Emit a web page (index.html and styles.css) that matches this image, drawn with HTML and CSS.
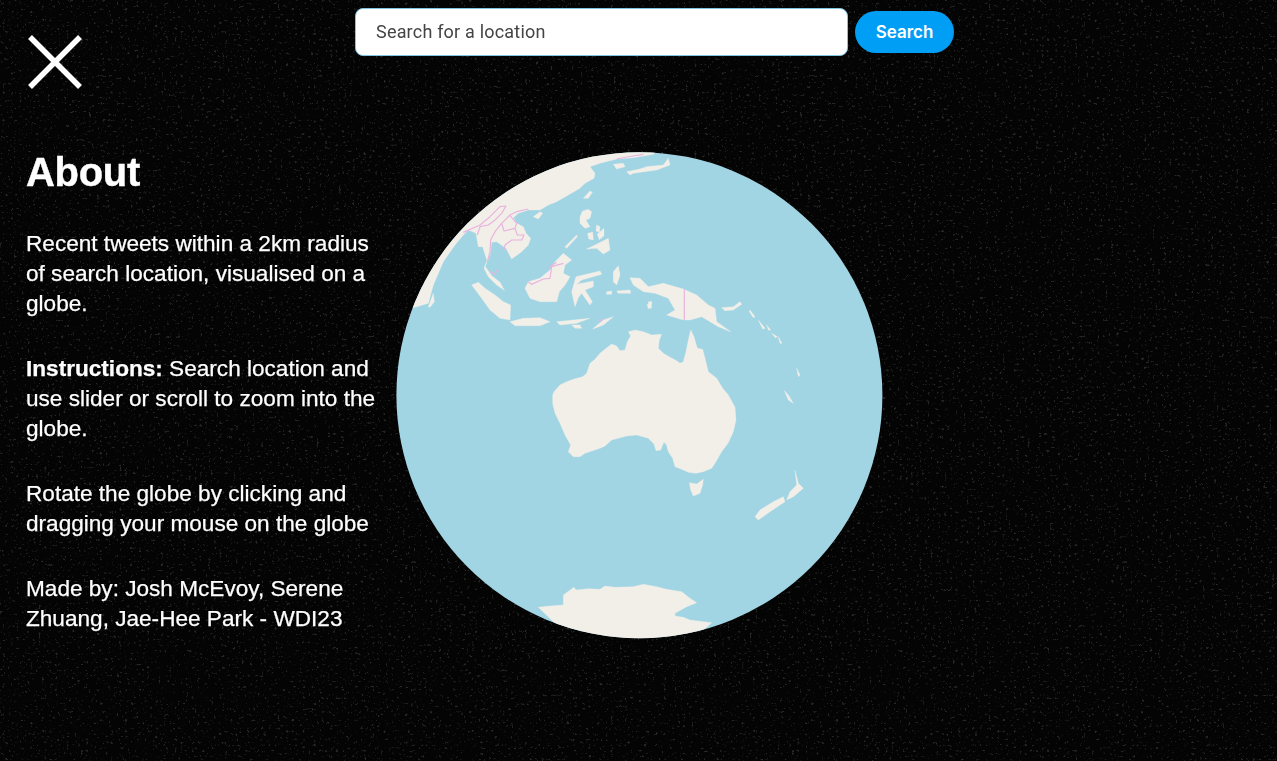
FILE: index.html
```html
<!DOCTYPE html>
<html lang="en">
<head>
<meta charset="utf-8">
<title>Tweet Globe</title>
<link rel="stylesheet" href="styles.css">
</head>
<body>
<svg class="stars" aria-hidden="true">
  <filter id="grain" x="0" y="0" width="100%" height="100%">
    <feTurbulence type="fractalNoise" baseFrequency="0.36" numOctaves="3" seed="11"/>
    <feColorMatrix type="matrix" values="0 0 0 0 0.8  0 0 0 0 0.78  0 0 0 0 0.74  7 0 0 0 -4.5"/>
    <feGaussianBlur stdDeviation="0.7"/>
  </filter>
  <rect class="stars-fill" width="100%" height="100%" filter="url(#grain)"/>
</svg>
<div class="page">
  <form class="search">
    <input class="search-input" type="text" placeholder="Search for a location">
    <button class="search-button" type="button">Search</button>
  </form>
  <aside class="about">
    <svg class="close" viewBox="0 0 54 54" aria-label="Close">
      <path d="M2 2 52 52M52 2 2 52"/>
    </svg>
    <h1>About</h1>
    <p>Recent tweets within a 2km radius of search location, visualised on a globe.</p>
    <p><strong>Instructions:</strong> Search location and use slider or scroll to zoom into the globe.</p>
    <p>Rotate the globe by clicking and dragging your mouse on the globe</p>
    <p>Made by: Josh McEvoy, Serene Zhuang, Jae-Hee Park - WDI23</p>
  </aside>
  <svg class="globe" viewBox="396 152 487 487" aria-label="Globe">
    <defs>
      <clipPath id="disc"><circle cx="639.4" cy="395.2" r="243"/></clipPath>
      <filter id="soft" x="-2%" y="-2%" width="104%" height="104%"><feGaussianBlur stdDeviation="0.55"/></filter>
    </defs>
    <circle class="sea" cx="639.4" cy="395.2" r="243"/>
    <g clip-path="url(#disc)">
      <g filter="url(#soft)">
        <!-- South-East Asia -->
        <g class="land" transform="translate(400 145) scale(.33333)">
          <polygon points="780,10 760,28 700,38 650,42 600,55 570,65 585,85 582,100 555,115 540,130 505,150 470,170 445,180 420,195 385,195 355,205 340,218 350,235 370,245 378,265 392,280 385,300 365,320 335,342 318,310 290,290 275,292 270,330 262,350 248,305 235,305 228,265 205,255 190,270 165,300 130,350 100,420 85,475 0,500 0,0 780,0"/>
          <polygon points="262,345 256,365 275,392 300,412 313,436 290,420 265,395 252,370"/>
          <polygon points="85,485 100,445 103,470 90,487"/>
          <polygon points="400,215 420,200 428,205 415,222"/>
          <polygon points="550,160 570,138 577,142 565,160"/>
          <polygon points="680,80 720,72 740,65 790,60 805,40 810,60 770,75 700,85 690,90"/>
          <polygon points="640,58 670,55 675,65 650,72"/>
          <polygon points="540,215 548,198 565,193 575,200 570,220 558,225 570,245 555,250 540,235"/>
          <polygon points="563,265 578,262 580,285 566,282"/>
          <polygon points="590,240 600,245 598,262 588,258"/>
          <polygon points="592,268 612,250 612,272 598,284"/>
          <polygon points="560,312 585,300 625,280 630,315 610,327 590,310"/>
          <polygon points="495,305 530,270 532,275 500,310"/>
          <polygon points="385,410 420,400 450,375 465,350 490,325 515,345 495,360 490,385 510,395 495,420 478,440 470,470 420,470 390,460 375,430"/>
          <polygon points="215,420 235,412 255,430 285,450 310,470 332,480 330,525 300,520 270,495 245,460"/>
          <polygon points="330,530 370,520 420,518 450,530 420,542 345,542"/>
          <polygon points="470,530 520,525 570,520 530,535 480,540"/>
          <polygon points="578,552 610,525 640,515 610,540"/>
          <polygon points="515,540 540,540 545,550 525,550"/>
          <polygon points="528,395 600,378 605,388 545,405 530,418 580,408 580,425 555,435 577,470 570,480 545,445 535,458 525,485 515,440"/>
          <polygon points="640,380 655,362 660,390 650,420 640,410"/>
          <polygon points="620,440 635,438 635,448 620,448"/>
          <polygon points="650,438 690,435 692,445 655,445"/>
          <polygon points="745,470 755,470 750,490"/>
        </g>
        <g class="border" transform="translate(400 145) scale(.33333)">
          <polyline points="190,262 240,240 270,215 300,185 318,183 305,205 285,225 265,240 240,245 232,270"/>
          <polyline points="262,350 270,320 272,285 285,260 305,235 330,210 350,200 385,192"/>
          <polyline points="305,235 312,258 345,250 352,270 372,270 365,285 335,285 315,300 312,315"/>
          <polyline points="330,212 350,235 345,250"/>
          <polyline points="270,380 285,388 290,375"/>
          <polyline points="385,410 395,418 430,402 450,400 455,365 490,355"/>
          <polyline points="445,368 470,352"/>
          <polyline points="600,530 610,522"/>
          <polyline points="650,42 680,36 730,28"/>
        </g>
        <!-- New Guinea and Pacific islands -->
        <g class="land" transform="translate(640 145) scale(.33333)">
          <polygon points="-30,398 0,400 25,425 70,415 130,432 170,450 205,480 225,490 230,530 272,560 235,545 185,515 150,525 130,525 80,510 105,495 85,460 45,445 10,440 -20,420"/>
          <polygon points="245,488 280,485 300,470 305,478 280,495 255,497"/>
          <polygon points="330,495 345,515 340,518 328,500"/>
          <polygon points="355,525 375,550 368,552"/>
          <polygon points="380,540 392,555 386,556"/>
          <polygon points="395,565 412,575 406,578"/>
          <polygon points="415,575 426,595 420,595"/>
          <polygon points="22,478 35,470 34,490 24,490"/>
        </g>
        <g class="border" transform="translate(640 145) scale(.33333)">
          <polyline points="133,433 133,525"/>
        </g>
        <!-- Australia and New Zealand -->
        <g class="land" transform="translate(540 320) scale(.33333)">
          <polygon points="38,225 42,215 60,195 80,185 100,178 128,170 140,160 150,130 165,118 180,100 195,88 215,72 230,78 240,92 255,90 262,65 272,48 265,35 285,30 310,35 335,45 365,43 358,60 355,85 370,100 390,112 410,122 420,130 430,125 438,95 445,60 452,30 462,50 472,85 488,88 495,115 505,155 530,175 548,205 565,225 585,262 588,300 580,335 565,368 545,395 525,430 515,445 490,455 468,460 445,457 425,448 405,440 398,415 385,395 378,375 372,365 362,390 348,392 342,372 325,355 290,345 260,348 215,360 195,378 180,385 135,400 120,410 100,410 85,395 92,375 75,345 60,310 45,280 38,250"/>
          <polygon points="448,488 470,492 490,478 488,495 480,520 460,528 452,510"/>
          <polygon points="645,590 660,570 700,545 730,530 735,545 690,575 655,600"/>
          <polygon points="740,540 750,515 770,495 765,450 775,490 790,505 760,530"/>
          <polygon points="733,212 745,225 760,250 745,240"/>
          <polygon points="770,145 780,165 775,170"/>
        </g>
        <g class="sea-fill" transform="translate(540 320) scale(.33333)">
          <polygon points="360,410 378,370 385,405"/>
        </g>
        <!-- Antarctica -->
        <g class="land" transform="translate(500 530) scale(.33333)">
          <polygon points="115,232 150,228 190,225 190,195 222,172 228,180 265,176 300,178 315,168 345,172 400,170 430,163 470,170 500,178 545,185 570,205 590,218 560,230 525,250 525,258 550,262 570,270 635,278 560,345 420,365 250,345 160,275"/>
        </g>
      </g>
    </g>
  </svg>
</div>
</body>
</html>
```
FILE: styles.css
```css
html, body {
  margin: 0;
  height: 100%;
  overflow: hidden;
  background: #040404;
}

.stars {
  position: fixed;
  inset: 0;
  width: 100%;
  height: 100%;
  opacity: 0.16;
}

.stars-fill { fill: #fff; }

.page {
  position: relative;
  display: grid;
  grid-template-columns: 355px 30px 1fr;
  grid-template-rows: auto 1fr;
  height: 100vh;
  color: #fff;
  font-family: "Liberation Sans", Arial, sans-serif;
}

.search {
  grid-column: 2 / 4;
  grid-row: 1;
  z-index: 1;
  display: flex;
  align-items: center;
  gap: 7px;
  padding-top: 8px;
}

.search-input {
  box-sizing: border-box;
  width: 493px;
  height: 48px;
  padding: 0 20px 2px;
  border: 1px solid #7fc4e2;
  border-radius: 8px;
  background: #fff;
  color: #444;
  font-family: Roboto, "Liberation Sans", sans-serif;
  font-size: 18px;
  letter-spacing: 0.2px;
  outline: none;
}

.search-input::placeholder {
  color: #444;
  opacity: 1;
}

.search-button {
  box-sizing: border-box;
  width: 99px;
  height: 42px;
  padding: 0;
  border: 0;
  border-radius: 21px;
  background: #009ff5;
  color: #fff;
  font-family: Inter, "Liberation Sans", sans-serif;
  font-size: 17px;
  font-weight: 600;
}

.about {
  grid-column: 1 / 3;
  grid-row: 1 / 3;
  padding: 35px 0 0 26px;
}

.close {
  display: block;
  width: 54px;
  height: 54px;
  margin-left: 2px;
  fill: none;
  stroke: #fff;
  stroke-width: 5.5;
}

.about h1 {
  margin: 59px 0 0;
  font-size: 40px;
  line-height: 48px;
  font-weight: 700;
  letter-spacing: -0.3px;
  -webkit-text-stroke: 0.4px #fff;
}

.about p {
  margin: 35px 0 0;
  font-size: 22.6px;
  line-height: 30px;
  -webkit-text-stroke: 0.25px #fff;
}

.about h1 + p { margin-top: 33px; }

.globe {
  grid-column: 3;
  grid-row: 2;
  display: block;
  width: 487px;
  height: 487px;
  margin: 96px 0 0 11px;
}

.sea { fill: #a2d5e3; }
.sea-fill polygon { fill: #a2d5e3; }

.land polygon {
  fill: #f2efe9;
  stroke: #f2efe9;
  stroke-width: 1;
  stroke-linejoin: round;
}

.border polyline {
  fill: none;
  stroke: #e8b4de;
  stroke-width: 3.6;
  stroke-linejoin: round;
}
```
